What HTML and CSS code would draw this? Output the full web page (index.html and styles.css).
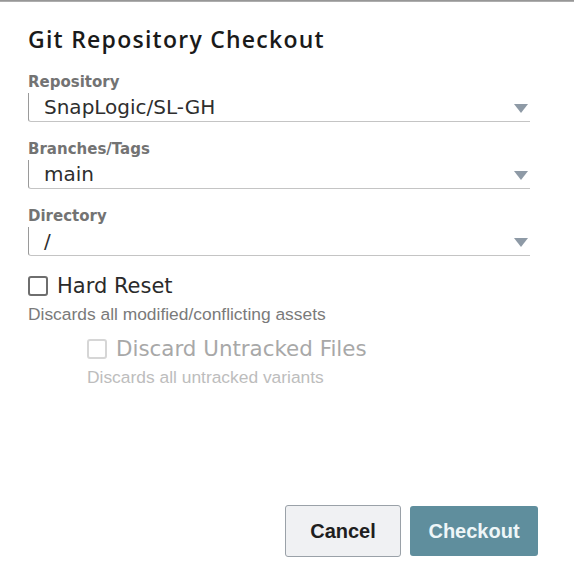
FILE: index.html
```html
<!DOCTYPE html>
<html>
<head>
<meta charset="utf-8">
<link rel="stylesheet" href="styles.css">
</head>
<body>
<div class="topline"></div>
<div class="dialog">
  <h1 class="title">Git Repository Checkout</h1>
  <div class="field">
    <div class="label">Repository</div>
    <div class="select">
      <span class="value fade">SnapLogic/SL-GH</span>
      <svg class="arrow" width="14" height="9" viewBox="0 0 14 9"><path d="M0 0h14L7 9z" fill="#8e9aa6"/></svg>
    </div>
  </div>
  <div class="field">
    <div class="label">Branches/Tags</div>
    <div class="select">
      <span class="value">main</span>
      <svg class="arrow" width="14" height="9" viewBox="0 0 14 9"><path d="M0 0h14L7 9z" fill="#8e9aa6"/></svg>
    </div>
  </div>
  <div class="field">
    <div class="label">Directory</div>
    <div class="select">
      <span class="value">/</span>
      <svg class="arrow" width="14" height="9" viewBox="0 0 14 9"><path d="M0 0h14L7 9z" fill="#8e9aa6"/></svg>
    </div>
  </div>
  <div class="option">
    <label class="check"><span class="box"></span><span class="check-text">Hard Reset</span></label>
    <div class="hint">Discards all modified/conflicting assets</div>
  </div>
  <div class="option sub disabled">
    <label class="check"><span class="box"></span><span class="check-text">Discard Untracked Files</span></label>
    <div class="hint">Discards all untracked variants</div>
  </div>
  <div class="footer">
    <button class="btn cancel">Cancel</button>
    <button class="btn primary">Checkout</button>
  </div>
</div>
</body>
</html>
```
FILE: styles.css
```css
html, body {
  margin: 0;
  padding: 0;
  background: #ffffff;
}
body {
  width: 574px;
  height: 574px;
  overflow: hidden;
  font-family: "DejaVu Sans", "Open Sans", sans-serif;
}
.topline {
  height: 2px;
  background: linear-gradient(#8c8c8c, #b8b8b8);
}
.dialog {
  padding: 24px 44px 0 28px;
  display: flex;
  flex-direction: column;
  height: 572px;
  box-sizing: border-box;
}
.title {
  margin: 0;
  font-family: "Open Sans", "DejaVu Sans", sans-serif;
  font-size: 23px;
  font-weight: 600;
  letter-spacing: 1.25px;
  color: #1a1a1a;
  line-height: 26px;
}
.field {
  display: flex;
  flex-direction: column;
}
.field:first-of-type { margin-top: 21px; }
.field + .field { margin-top: 18px; }
.label {
  font-size: 15px;
  font-weight: 700;
  color: #737373;
  line-height: 18px;
}
.select {
  height: 28px;
  border-left: 1px solid #9a9a9a;
  border-bottom: 1.5px solid #c4c4c4;
  border-bottom-left-radius: 3px;
  display: flex;
  align-items: center;
  padding-left: 15px;
  padding-right: 2px;
  margin-top: 2px;
}
.value {
  flex: 1;
  font-size: 20px;
  color: #2e2e2e;
  line-height: 26px;
  white-space: nowrap;
}
.value.fade {
  flex: 0 0 auto;
}
.arrow {
  margin-left: auto;
  margin-top: 2px;
}
.option {
  display: flex;
  flex-direction: column;
  margin-top: 18px;
}
.check {
  display: flex;
  align-items: center;
  gap: 9px;
}
.box {
  width: 16px;
  height: 16px;
  border: 2px solid #6e6e6e;
  border-radius: 3px;
  box-sizing: content-box;
}
.check-text {
  font-size: 21px;
  color: #2a2a2a;
  line-height: 24px;
}
.hint {
  font-family: "Liberation Sans", Arial, sans-serif;
  font-size: 17.4px;
  color: #7a7a7a;
  margin-top: 6px;
  line-height: 20px;
}
.sub {
  margin-left: 59px;
  margin-top: 13px;
}
.sub .check-text { font-size: 21.4px; }
.disabled .box { border-color: #d6d6d6; }
.disabled .check-text { color: #a8a8a8; }
.disabled .hint { color: #bdbdbd; }
.footer {
  margin-top: auto;
  margin-bottom: 17px;
  display: flex;
  justify-content: flex-end;
  gap: 9px;
  margin-right: -8px;
}
.btn {
  font-family: "Liberation Sans", Arial, sans-serif;
  font-size: 20px;
  font-weight: 700;
  height: 52px;
  border-radius: 3px;
  cursor: pointer;
  padding: 0;
}
.cancel {
  width: 116px;
  background: #f0f1f3;
  border: 1px solid #9aa1a8;
  color: #1e1e1e;
}
.primary {
  width: 128px;
  height: 50px;
  margin-top: 1px;
  background: #5f8e9d;
  border: none;
  color: #eef6f8;
}
```
